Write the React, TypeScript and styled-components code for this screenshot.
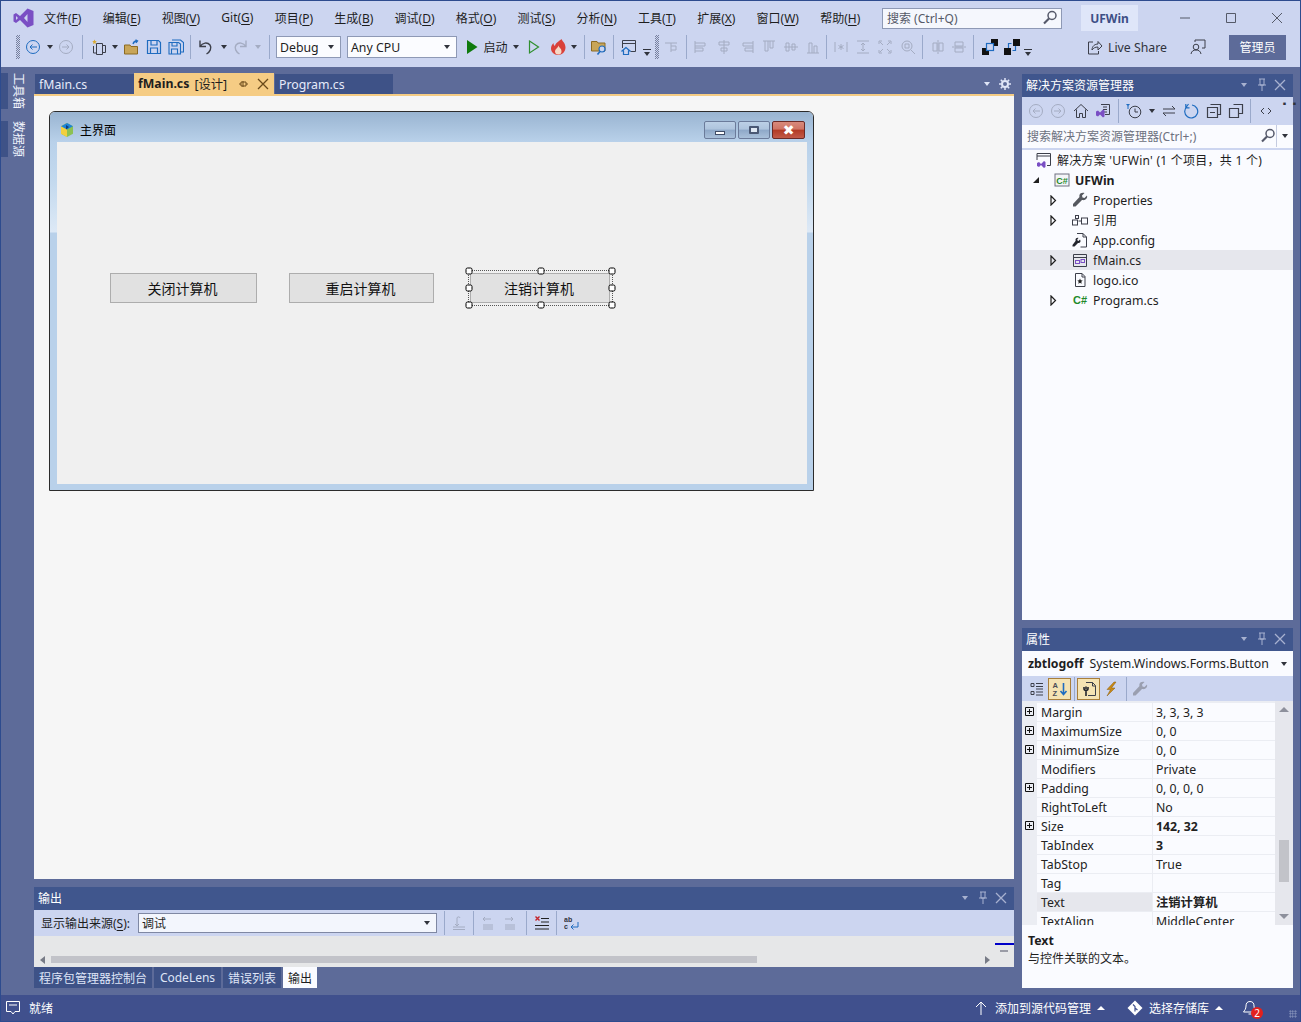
import React from 'react';
import styled, { createGlobalStyle } from 'styled-components';

const GlobalStyle = createGlobalStyle`
  html, body { margin: 0; padding: 0; background: #5d6b99; }
  body { font-family: "Noto Sans", "Noto Sans CJK SC", sans-serif; font-size: 12px; color: #1e1e1e; }
  * { box-sizing: border-box; }
`;

const gray = '#a4acc2';
const dark = '#3c3f4a';
const blue = '#1f6cc0';
const purple = '#7a4fc4';

// --- icon bits ---
const Ico = styled.svg.attrs({ viewBox: '0 0 16 16', fill: 'none' })`
  width: 16px;
  height: 16px;
  display: block;
  flex: none;
`;

const G = ({ d, c = gray }: { d: string; c?: string }) => (
  <Ico><path d={d} stroke={c} strokeWidth="1" /></Ico>
);

const Back = ({ c }: { c: string }) => (
  <Ico><circle cx="8" cy="8" r="6.5" stroke={c} /><path d="M12 8H5M7.5 5.5 5 8l2.5 2.5" stroke={c} /></Ico>
);
const Forward = ({ c }: { c: string }) => (
  <Ico><circle cx="8" cy="8" r="6.5" stroke={c} /><path d="M4 8h7M8.5 5.5 11 8l-2.5 2.5" stroke={c} /></Ico>
);
const NewProject = () => (
  <Ico>
    <path d="M5.500 4.500h6v11h-6zM2.500 7v7h3M11.500 6.500H14.500v7h-3" stroke={dark} />
    <path d="M3.500.5l.7 1.500 1.600.2-1.200 1.100.3 1.700-1.400-.8-1.400.8.3-1.700L1.200 2.200l1.600-.2z" fill="#d9a92f" />
  </Ico>
);
const OpenFolder = () => (
  <Ico>
    <path d="M.5 6h5.500l1 1.500h6.500V15H.5z" fill="#c8a558" stroke="#8b6a22" />
    <path d="M9 5c.5-2 2-3 4-3M11.500.8 13.500 2l-1.500 1.800" stroke={blue} strokeWidth="1.300" />
  </Ico>
);
const Save = () => (
  <Ico><path d="M1.500 1.500h11l2 2v11h-13zM5 1.500v4.500h6V1.500M4.500 14.500V9h7v5.500" stroke={blue} strokeWidth="1.200" /></Ico>
);
const SaveAll = () => (
  <Ico><path d="M4 1h8.500l3 2.500v9.500H13M1 3.500h9.500l2 1.500v10H1zM4 3.500v3.500h5V3.500M3.500 15v-5h6v5" stroke={blue} strokeWidth="1.100" /></Ico>
);
const Undo = ({ c }: { c: string }) => (
  <Ico><path d="M3 1.500v6h6M3 7.500c2.500-4 7.500-4.500 10-1.500 2 3 0 7-3.500 9" stroke={c} strokeWidth="1.400" /></Ico>
);
const Redo = ({ c }: { c: string }) => (
  <Ico><path d="M13 1.500v6H7M13 7.500c-2.500-4-7.500-4.500-10-1.500-2 3 0 7 3.500 9" stroke={c} strokeWidth="1.400" /></Ico>
);
const Play = () => <Ico><path d="M3 1 13.500 8 3 15z" fill="#0e7a0d" /></Ico>;
const PlayOutline = () => <Ico><path d="M3.500 2 12.500 8l-9 6z" stroke="#2f8f2e" strokeWidth="1.200" /></Ico>;
const Flame = () => (
  <Ico>
    <path d="M11.500 0c.5 2 4 4 4 8.500 0 4.500-3.500 7.500-7.500 7.500S1 13 1 9.500c0-2 1-4 2.500-5.500 0 1.500.5 2.500 1.500 3C5 4.500 8.500 2.500 11.500 0z" fill="#d9413a" />
    <path d="M8.500 6.500c0 1.500 3 3 3 5.500a3 3 0 0 1-6.500.5c0-2.500 3-3.500 3.500-6z" fill="#f7d9c6" />
  </Ico>
);
const FindFolder = () => (
  <Ico>
    <path d="M.5 2.500H6L7 4h7v8H.5z" fill="#c8a558" stroke="#8b6a22" />
    <circle cx="11" cy="10" r="3" fill="#ccd5f0" stroke={blue} strokeWidth="1.200" />
    <path d="M9 12.500l-2.500 3" stroke={blue} strokeWidth="1.600" />
  </Ico>
);
const WindowHome = () => (
  <Ico>
    <path d="M1.500 1.500h13v11h-5M1.500 9V1.500M1.500 4.500h13" stroke={dark} />
    <path d="M5 8.500 1 12h1.500v3.500h5V12H9z" stroke={blue} strokeWidth="1.200" fill="#ccd5f0" />
  </Ico>
);
const LayerFront = () => (
  <Ico>
    <rect x="0" y="9" width="7" height="7" fill="#111" />
    <rect x="9" y="0" width="7" height="7" fill="#111" />
    <rect x="4.500" y="4.500" width="7" height="7" fill="#ccd5f0" stroke={blue} strokeWidth="1.200" />
  </Ico>
);
const LayerBack = () => (
  <Ico>
    <rect x="0" y="9" width="7" height="7" fill="#111" />
    <rect x="9" y="0" width="7" height="7" fill="#111" />
    <path d="M4.500 9V4.500h3M11.500 7v4.500h-3" stroke={blue} strokeWidth="1.200" />
  </Ico>
);
const ShareIcon = () => (
  <Ico><path d="M6 3H1.500v12h10v-3M5 11c0-4 3-6 6-6V2.500L15 7l-4 4V8c-3 0-4.500 1-6 3z" stroke={dark} /></Ico>
);
const PersonIcon = () => (
  <Ico>
    <circle cx="6" cy="8" r="2.800" stroke={dark} />
    <path d="M1 15c.5-3 2.500-4 5-4s4.500 1 5 4M5 3V1h10v8h-3" stroke={dark} />
  </Ico>
);
const SearchGlass = () => (
  <Ico>
    <circle cx="10" cy="5.500" r="4" stroke="#55596a" strokeWidth="1.500" />
    <path d="M7 8.500 2 13.500" stroke="#55596a" strokeWidth="2.200" />
  </Ico>
);
const VsLogo = () => (
  <LogoSvg viewBox="0 0 21 20">
    <path d="M14.500.5 20.500 3v14l-6 2.500L7 12l-4 3-2.500-1.500v-7L3 5l4 3zM14.500 6 11 10l3.500 4zM3 8v4l2-2z" fill={purple} fillRule="evenodd" />
  </LogoSvg>
);
const VsDoc = () => (
  <Ico>
    <path d="M6 1.500h8.500v10H10" stroke={dark} />
    <path d="M8 4h4M8 6.500h4M8 9h4" stroke={dark} />
    <path d="M1 8.500 3 7.500l2 2 3-3 1.500 1v6l-1.500 1-3-3-2 2-2-1z" fill={purple} />
  </Ico>
);
const HomeIcon = () => <Ico><path d="M1 8 8 1.500 15 8M3.500 6.500v8h3v-4h3v4h3v-8" stroke={dark} /></Ico>;
const ClockIcon = () => (
  <Ico>
    <circle cx="9" cy="9" r="5.800" stroke={dark} />
    <path d="M9 5.500V9h3" stroke={dark} />
    <path d="M0 1h4L2 3.500z" fill={blue} />
    <path d="M2 3v3" stroke={blue} />
  </Ico>
);
const RefreshIcon = () => <Ico><path d="M5.500 1 3 4.500M2.800 1V4.800h3.700M4 3.500a6.500 6.500 0 1 0 5-1.500" stroke={blue} strokeWidth="1.200" /></Ico>;
const DocCopy = () => <Ico><path d="M5.500 1.500h9v9h-4M1.500 5.500h9v9h-9z" stroke={dark} strokeWidth="1.200" /></Ico>;
const Collapse = () => <Ico><path d="M4.500 1.500h10v10h-3M1.500 4.500h10v10h-10zM4 9.500h5" stroke={dark} strokeWidth="1.200" /></Ico>;

const SolutionIcon = () => (
  <Ico>
    <path d="M1 8V1.500h13.500v12H11M1 4h13.500" stroke={dark} />
    <path d="M1 11 3 10l2 2 3-3 1.500 1v5L8 16l-3-3-2 2-2-1z" fill={purple} />
  </Ico>
);
const ProjectIcon = () => (
  <Ico>
    <rect x="1" y="2" width="14" height="12" fill="#f4f5f8" stroke="#6e7180" />
    <text x="8" y="11.500" textAnchor="middle" fontSize="9" fontWeight="700" fill="#1f8a2a" fontFamily="Liberation Sans, sans-serif">C#</text>
  </Ico>
);
const WrenchIcon = ({ c = '#55585f' }: { c?: string }) => (
  <Ico><path d="M15 3.500 12.500 6 10.500 5.500 10 3.500 12.500 1C10.500.2 8 1 7.500 3c-.3 1 0 2 0 2L1 12v2.500h2.500L10 8s1.500.3 2.500 0c2-.6 3.200-2.500 2.500-4.500z" fill={c} /></Ico>
);
const RefsIcon = () => (
  <Ico>
    <rect x="0.500" y="8" width="5" height="5" stroke={dark} />
    <rect x="9.500" y="6" width="6" height="6" stroke={dark} />
    <rect x="3.500" y="3.500" width="3" height="3" stroke={dark} />
    <path d="M6.500 9h3" stroke={dark} />
  </Ico>
);
const ConfigIcon = () => (
  <Ico>
    <path d="M5 1.500h6l3.500 3.500v10h-6M11 1.500V5h3.500" stroke={dark} />
    <path d="M8 7.500 6.500 9 5.500 8.500l-.2-1.200L6.500 6C5 5.500 3.500 6.500 3.500 8l.2.800L.5 13v1.500h2L6 11h1c1.500-.3 2-1.800 1-3.500z" fill="#23252d" />
  </Ico>
);
const FormIcon = () => (
  <Ico>
    <path d="M1.500 2.500h13v12h-13zM1.500 5.500h13" stroke={dark} />
    <rect x="3.500" y="8.500" width="4" height="3" stroke={purple} />
    <rect x="9" y="7.500" width="3.500" height="3" stroke={purple} />
  </Ico>
);
const IcoFile = () => (
  <Ico>
    <path d="M3.500 1.500h6.500l3 3v10H3.500zM10 1.500V5h3" stroke={dark} />
    <path d="M8 6.500l.8 1.800 1.900.2-1.400 1.300.4 2L8 10.800l-1.700 1 .4-2-1.400-1.300 1.900-.2z" fill="#222" />
  </Ico>
);
const CsIcon = () => (
  <Ico>
    <text x="8" y="12" textAnchor="middle" fontSize="11" fontWeight="700" fill="#1f8a2a" fontFamily="Liberation Sans, sans-serif">C#</text>
  </Ico>
);
const Plus = () => (
  <PlusSvg viewBox="0 0 9 9"><path d="M.5.500h8v8h-8zM2 4.500h5M4.500 2v5" stroke="#111" fill="none" /></PlusSvg>
);
const ListIcon = () => (
  <Ico><path d="M2 2.500h3v3H2zM2 10.500h3v3H2zM7 2.500h7M7 5.500h7M7 8h7M7 11h7M7 14h7" stroke={dark} /></Ico>
);
const AzIcon = () => (
  <Ico>
    <text x="0.500" y="7" fontSize="7.500" fontWeight="700" fill="#4a4d58" fontFamily="Liberation Sans, sans-serif">A</text>
    <text x="0.500" y="15" fontSize="7.500" fontWeight="700" fill="#4a4d58" fontFamily="Liberation Sans, sans-serif">Z</text>
    <path d="M11.500 2v11M8.500 10l3 3.500 3-3.500" stroke={blue} strokeWidth="1.600" />
  </Ico>
);
const PropPage = () => (
  <Ico>
    <path d="M5 1.500h6.500l3 3v10H7M11.500 1.500V5h3" stroke={dark} />
    <path d="M5 5.500v2.800M3 6v1.500A2 2 0 0 0 7 7.500V6M5 9.500v5.500" stroke="#23252d" strokeWidth="1.600" />
  </Ico>
);
const BoltIcon = () => <Ico><path d="M11 1 4 8.500h3.500L4 15l8-8H8.500L13 1z" fill="#c98a15" stroke="#8a5d10" strokeWidth="0.500" /></Ico>;
const BellIcon = () => <Ico><path d="M8 1.500c-3 0-4 2-4 4.500 0 3-1.500 4.500-2.500 6h13C13.500 10.500 12 9 12 6c0-2.500-1-4.500-4-4.500zM6.500 14h3" stroke="#fff" /></Ico>;
const CommentIcon = () => <Ico><path d="M1.500 1.500h13v10H10L8 14l-2-2.500H1.500zM4 5h8" stroke="#fff" /></Ico>;
const UpIcon = () => <Ico><path d="M8 15V2M3 7l5-5 5 5" stroke="#fff" /></Ico>;
const GitIcon = () => <Ico><path d="M8 .5 15.500 8 8 15.500.5 8z" fill="#fff" /><path d="M6 4.500 8 6.500v5M8 8l2.500 2" stroke="#40508d" strokeWidth="1.200" /></Ico>;
const WordWrap = () => (
  <Ico>
    <text x="0" y="7" fontSize="7" fontWeight="700" fill="#30333c" fontFamily="Liberation Sans, sans-serif">ab</text>
    <text x="0" y="14" fontSize="7" fontWeight="700" fill="#30333c" fontFamily="Liberation Sans, sans-serif">c</text>
    <path d="M14 7v5H7M9.500 9.500 7 12l2.500 2.500" stroke={blue} />
  </Ico>
);
const ClearAll = () => (
  <Ico>
    <path d="M7 3.500h8M7 7h8M1 10.500h14M1 14h14" stroke="#222" />
    <path d="M1.500 1.500l4 4M5.500 1.500l-4 4" stroke="#c4242b" strokeWidth="1.400" />
  </Ico>
);
const MiniForm = () => (
  <Ico>
    <path d="M8 1 14 4.200v7.600L8 15 2 11.800V4.200z" fill="#8cc152" />
    <path d="M8 1 2 4.200v7.600L8 15z" fill="#f3cf3d" />
    <path d="M8 1 14 4.200 8 7.500 2 4.200z" fill="#1d84d8" />
    <path d="M7 3v4.500L10 5z" fill="#123f7a" />
  </Ico>
);

// --- window ---
const Window = styled.div`
  width: 1301px;
  height: 1022px;
  border: 1px solid #2d4b8e;
  background: #5d6b99;
  display: flex;
  flex-direction: column;
  overflow: hidden;
`;

const Chrome = styled.header`
  height: 66px;
  flex: none;
  background: #ccd5f0;
`;

const MenuRow = styled.div`
  height: 32px;
  display: flex;
  align-items: center;
  padding: 2px 0 0 12px;
`;

const LogoSvg = styled.svg`
  width: 21px;
  height: 20px;
  margin-right: 10px;
  flex: none;
`;

const Menu = styled.nav`
  display: flex;
  gap: 21.200px;
`;

const MenuItem = styled.span`
  color: #1e1e1e;
  white-space: nowrap;
  u { text-underline-offset: 2px; }
`;

const SearchBox = styled.div`
  margin-left: auto;
  width: 180px;
  height: 21px;
  background: #f5f7fd;
  border: 1px solid #8e99b5;
  display: flex;
  align-items: center;
  justify-content: space-between;
  padding: 0 3px 0 4px;
  color: #555a68;
`;

const ProjectBadge = styled.div`
  margin: 0 24px 0 19px;
  width: 57px;
  height: 26px;
  background: #dfe6f9;
  color: #3d4f86;
  font-weight: 700;
  display: flex;
  align-items: center;
  justify-content: center;
`;

const CaptionCtl = styled.div`
  width: 46px;
  height: 24px;
  display: flex;
  align-items: center;
  justify-content: center;
`;

const ToolRow = styled.div`
  height: 28px;
  display: flex;
  align-items: center;
  padding-left: 11px;
`;

const Slot = styled.div<{ $w: number }>`
  width: ${p => p.$w}px;
  height: 24px;
  flex: none;
  display: flex;
  align-items: center;
  justify-content: center;
  white-space: nowrap;
`;

const Sep = styled.i`
  display: block;
  width: 1px;
  height: 24px;
  background: #9aa9cb;
`;

const Grip = styled.i`
  display: block;
  width: 4px;
  height: 24px;
  background: repeating-conic-gradient(#77809e 0 25%, transparent 0 50%) 0 0 / 2px 2px;
`;

const Caret = styled.i<{ $c?: string }>`
  display: block;
  width: 0;
  height: 0;
  border-left: 3.500px solid transparent;
  border-right: 3.500px solid transparent;
  border-top: 4px solid ${p => p.$c || '#30333c'};
`;

const CaretUp = styled.i`
  display: block;
  width: 0;
  height: 0;
  border-left: 4px solid transparent;
  border-right: 4px solid transparent;
  border-bottom: 4px solid #fff;
`;

const DropLine = styled.i`
  display: block;
  width: 8px;
  border-top: 1px solid #30333c;
  margin-bottom: 2px;
`;

const DropStack = styled.div`
  display: flex;
  flex-direction: column;
  align-items: center;
  margin-top: 10px;
`;

const Combo = styled.div<{ $w: number; $ml: number }>`
  width: ${p => p.$w}px;
  margin-left: ${p => p.$ml}px;
  height: 22px;
  flex: none;
  background: #fbfcff;
  border: 1px solid #8e99b5;
  display: flex;
  align-items: center;
  justify-content: space-between;
  padding: 0 6px 0 3px;
  font-size: 12.300px;
`;

const RightTools = styled.div`
  margin-left: auto;
  display: flex;
  align-items: center;
  padding-right: 14px;
`;

const LiveShare = styled.div`
  display: flex;
  align-items: center;
  gap: 5px;
  font-size: 12.300px;
  color: #30333c;
`;

const AdminButton = styled.div`
  width: 57px;
  height: 25px;
  background: #5d6b99;
  color: #fff;
  display: flex;
  align-items: center;
  justify-content: center;
`;

const PersonSlot = styled.div`
  margin: 0 23px 0 23px;
`;

const Main = styled.main`
  flex: 1;
  display: flex;
  padding: 7px 7px 7px 0;
  min-height: 0;
`;

const Rail = styled.aside`
  width: 33px;
  flex: none;
  margin-top: -1px;
  display: flex;
  flex-direction: column;
  align-self: flex-start;
  gap: 12px;
`;

const RailTab = styled.div`
  height: 36px;
  display: flex;
  align-items: center;
  gap: 4px;
  &::before {
    content: '';
    width: 7px;
    height: 100%;
    background: #3e5287;
  }
`;

const RailText = styled.span`
  writing-mode: vertical-rl;
  text-orientation: sideways;
  color: #f0f3fc;
  line-height: 12px;
`;

const Center = styled.section`
  width: 980px;
  flex: none;
  margin-right: 8px;
  display: flex;
  flex-direction: column;
  gap: 8px;
`;

const DocWell = styled.div`
  flex: 1;
  display: flex;
  flex-direction: column;
  min-height: 0;
`;

const DocTabs = styled.div`
  height: 22px;
  flex: none;
  display: flex;
  align-items: flex-start;
  border-bottom: 2px solid #f5cc84;
`;

const DocTab = styled.div<{ $w: number; $active?: boolean }>`
  width: ${p => p.$w}px;
  height: ${p => (p.$active ? 21 : 20)}px;
  margin-left: ${p => (p.$active ? 0 : 1)}px;
  margin-top: ${p => (p.$active ? -1 : 0)}px;
  background: ${p => (p.$active ? '#f5cc84' : '#3e5287')};
  color: ${p => (p.$active ? '#1e1e1e' : '#e6ebfa')};
  display: flex;
  align-items: center;
  padding: 0 4px;
  gap: 5px;
  font-size: 12.300px;
  white-space: nowrap;
  b { font-weight: 700; }
`;

const DocTabActions = styled.div`
  margin-left: auto;
  display: flex;
  align-items: center;
  height: 20px;
`;

const TabGlyphs = styled.div`
  margin-left: auto;
  display: flex;
  align-items: center;
  gap: 6px;
`;

const Surface = styled.div`
  flex: 1;
  background: #f6f6f6;
  padding: 15px;
`;

// --- designer form ---
const FormWindow = styled.div`
  width: 765px;
  height: 380px;
  border: 1px solid #2b2b2b;
  border-radius: 6px 6px 0 0;
  display: flex;
  flex-direction: column;
  overflow: hidden;
`;

const FormTitle = styled.div`
  height: 30px;
  flex: none;
  background: linear-gradient(#99b4d1, #b9d1ea);
  display: flex;
  align-items: center;
  padding: 6px 8px 0 9px;
  gap: 5px;
  color: #000;
`;

const CaptionGroup = styled.div`
  margin-left: auto;
  display: flex;
  gap: 2px;
`;

const CaptionBtn = styled.div<{ $w: number; $close?: boolean }>`
  width: ${p => p.$w}px;
  height: 18px;
  border: 1px solid ${p => (p.$close ? '#6b2a26' : '#6b7b9a')};
  border-radius: 2px;
  background: ${p =>
    p.$close
      ? 'linear-gradient(#d88a7c 0, #cf7464 45%, #b23a24 50%, #c25a48 100%)'
      : 'linear-gradient(#bcd0e6 0, #aec4dd 45%, #8ea8c8 50%, #a9c0da 100%)'};
  display: flex;
  align-items: center;
  justify-content: center;
`;

const MinMark = styled.i`
  display: block;
  width: 10px;
  height: 4px;
  margin-top: 5px;
  background: #fff;
  border: 1px solid #3f4c66;
`;

const MaxMark = styled.i`
  display: block;
  width: 10px;
  height: 8px;
  background: #dfe8f3;
  border: 2px solid #4a5874;
  border-radius: 1px;
`;

const CloseMark = styled.span`
  color: #fff;
  font: 700 14px "Liberation Sans", "DejaVu Sans", sans-serif;
  line-height: 14px;
`;

const FormBody = styled.div`
  flex: 1;
  padding: 0 6px 6px 7px;
  background: linear-gradient(#b9d1ea 0, #c3d9ee 40px, #dde9f6 90px, #b9d1ea 91px, #b9d1ea 100%);
`;

const FormClient = styled.div`
  height: 100%;
  background: #f0f0f0;
  display: flex;
  align-items: center;
  align-content: flex-start;
  flex-wrap: wrap;
  padding: 128px 0 0 53px;
`;

const FormButton = styled.div<{ $w: number; $ml?: number }>`
  width: ${p => p.$w}px;
  margin-left: ${p => p.$ml || 0}px;
  height: 30px;
  background: #e1e1e1;
  border: 1px solid #adadad;
  font-size: 14px;
  color: #111;
  display: flex;
  align-items: center;
  justify-content: center;
  padding: 0 2px 1px 0;
`;

const SelectFrame = styled.div`
  position: relative;
  width: 145px;
  height: 36px;
  margin-left: 34px;
  border: 1px dotted #555;
  padding: 2px 0 0 1px;
`;

const Handle = styled.i<{ $x: number; $y: number }>`
  position: absolute;
  left: ${p => p.$x}%;
  top: ${p => p.$y}%;
  width: 7px;
  height: 7px;
  transform: translate(-50%, -50%);
  background: #fff;
  border: 1px solid #000;
  border-radius: 2px;
`;

// --- tool windows ---
const PanelHead = styled.div`
  height: 23px;
  flex: none;
  background: #40568d;
  color: #fff;
  display: flex;
  align-items: center;
  padding: 0 4px 1px;
`;

const HeadGlyphs = styled.div`
  margin-left: auto;
  display: flex;
  align-items: center;
`;

const HeadGlyph = styled.div`
  width: 18px;
  display: flex;
  justify-content: center;
  align-items: center;
`;

const SmallIco = styled.svg.attrs({ viewBox: '0 0 14 14', fill: 'none' })`
  width: 14px;
  height: 14px;
  display: block;
`;

const PanelTitle = ({ title }: { title: string }) => (
  <PanelHead>
    {title}
    <HeadGlyphs>
      <HeadGlyph><Caret $c="#a7b1d0" /></HeadGlyph>
      <HeadGlyph><SmallIco><path d="M4 1h6M5 1v6h4V1M3 7h8M7 7v6" stroke="#a7b1d0" /></SmallIco></HeadGlyph>
      <HeadGlyph><SmallIco><path d="M2 2l10 10M12 2 2 12" stroke="#a7b1d0" strokeWidth="1.300" /></SmallIco></HeadGlyph>
    </HeadGlyphs>
  </PanelHead>
);

const PlusSvg = styled.svg`
  width: 9px;
  height: 9px;
  display: block;
`;

const OutputPanel = styled.div`
  height: 80px;
  flex: none;
  display: flex;
  flex-direction: column;
`;

const OutputBar = styled.div`
  height: 26px;
  flex: none;
  background: #ccd5f0;
  display: flex;
  align-items: center;
  padding-left: 7px;
`;

const OutLabel = styled.span`
  width: 90px;
  white-space: nowrap;
  u { text-underline-offset: 2px; }
`;

const OutCombo = styled.div`
  width: 299px;
  margin: 0 3px 0 7px;
  height: 20px;
  background: #f3f6fd;
  border: 1px solid #7f88a3;
  display: flex;
  align-items: center;
  justify-content: space-between;
  padding: 0 6px 0 3px;
`;

const OutputBody = styled.div`
  flex: 1;
  background: #e6e7e8;
  display: flex;
`;

const HTrack = styled.div`
  flex: 1;
  height: 7px;
  margin-top: 20px;
  display: flex;
  align-items: center;
  padding: 0 5px 0 6px;
`;

const ArrowL = styled.i`
  display: block;
  width: 0;
  height: 0;
  border-top: 4px solid transparent;
  border-bottom: 4px solid transparent;
  border-right: 5px solid #777b86;
`;

const ArrowR = styled.i`
  display: block;
  width: 0;
  height: 0;
  margin-left: auto;
  border-top: 4px solid transparent;
  border-bottom: 4px solid transparent;
  border-left: 5px solid #777b86;
`;

const HThumb = styled.i`
  display: block;
  width: 706px;
  height: 7px;
  margin-left: 6px;
  background: #c2c3c9;
`;

const SplitMark = styled.div`
  width: 19px;
  flex: none;
  padding-top: 7px;
  &::before {
    content: '';
    display: block;
    height: 2px;
    background: #0000c8;
  }
  &::after {
    content: '';
    display: block;
    width: 8px;
    height: 2px;
    margin: 5px 0 0 5px;
    background: #9a9ca6;
  }
`;

const BottomTabs = styled.div`
  height: 21px;
  flex: none;
  display: flex;
  gap: 2px;
  margin-top: -8px;
`;

const BottomTab = styled.div<{ $w: number; $active?: boolean }>`
  width: ${p => p.$w}px;
  height: 21px;
  background: ${p => (p.$active ? '#fafbff' : '#3e5287')};
  color: ${p => (p.$active ? '#1e1e1e' : '#dfe5f7')};
  display: flex;
  align-items: center;
  justify-content: center;
  white-space: nowrap;
`;

const RightCol = styled.section`
  width: 271px;
  flex: none;
  display: flex;
  flex-direction: column;
  gap: 8px;
`;

const Explorer = styled.div`
  height: 546px;
  flex: none;
  background: #fafbff;
  display: flex;
  flex-direction: column;
`;

const ExpBar = styled.div`
  height: 28px;
  flex: none;
  background: #ccd5f0;
  display: flex;
  align-items: center;
  padding-left: 3px;
`;

const Overflow = styled.span`
  align-self: flex-start;
  font-size: 9px;
  line-height: 10px;
  color: #30333c;
  letter-spacing: 1px;
`;

const ExpSearch = styled.div`
  height: 23px;
  flex: none;
  background: #fafbff;
  display: flex;
  align-items: center;
  padding: 0 0 1px 5px;
  color: #6d7180;
`;

const ExpSearchTail = styled.div`
  margin-left: auto;
  display: flex;
  align-items: center;
  height: 100%;
  div + div { border-left: 1px solid #c4cbe0; }
`;

const ExpSearchBtn = styled.div`
  width: 17px;
  height: 100%;
  display: flex;
  align-items: center;
  justify-content: center;
`;

const SearchStrip = styled.div`
  height: 2px;
  flex: none;
  background: #ccd5f0;
`;

const Tree = styled.div`
  display: flex;
  flex-direction: column;
`;

const TreeRow = styled.div<{ $sel?: boolean }>`
  height: 20px;
  display: flex;
  align-items: center;
  background: ${p => (p.$sel ? '#e6e7ed' : 'transparent')};
  font-size: 12.300px;
  white-space: nowrap;
`;

const Expander = styled.div<{ $level: number }>`
  width: 14px;
  margin-left: ${p => (p.$level - 1) * 18 + 7}px;
  flex: none;
  display: flex;
  justify-content: center;
`;

const TriOpen = styled.i`
  display: block;
  width: 0;
  height: 0;
  border-left: 6px solid transparent;
  border-bottom: 6px solid #1e1e1e;
`;

const TriSvg = styled.svg.attrs({ viewBox: '0 0 7 11', fill: 'none' })`
  width: 7px;
  height: 11px;
  display: block;
  margin-left: -2px;
`;

const TriClosed = () => (
  <TriSvg><path d="M1 1l4.500 4.500L1 10z" stroke="#1e1e1e" strokeWidth="1.200" /></TriSvg>
);

const TreeIcon = styled.div`
  margin: 0 5px 0 11px;
`;

const TreeLabel = styled.span<{ $bold?: boolean }>`
  font-weight: ${p => (p.$bold ? 700 : 400)};
`;

const CjkText = styled.span<{ $wide?: boolean }>`
  font-size: 12px;
  letter-spacing: ${p => (p.$wide ? 0.25 : 0)}px;
`;

const Props = styled.div`
  flex: 1;
  background: #fafbff;
  display: flex;
  flex-direction: column;
  min-height: 0;
`;

const ObjectRow = styled.div`
  height: 25px;
  flex: none;
  display: flex;
  align-items: center;
  padding: 0 6px 0 6px;
  font-size: 12.300px;
  gap: 6px;
  white-space: nowrap;
  b { font-weight: 700; }
  i:last-child { margin-left: auto; }
`;

const PropBar = styled.div`
  height: 25px;
  flex: none;
  background: #ccd5f0;
  display: flex;
  align-items: center;
  padding-left: 3px;
`;

const ActiveTool = styled.div`
  width: 23px;
  height: 22px;
  flex: none;
  background: #f5e3b3;
  border: 1px solid #a87e3b;
  display: flex;
  align-items: center;
  justify-content: center;
`;

const GridArea = styled.div`
  height: 224px;
  flex: none;
  display: flex;
  background: #ebedf3;
`;

const GridRows = styled.div`
  width: 253px;
  flex: none;
  padding-top: 2px;
  overflow: hidden;
`;

const GridRow = styled.div`
  height: 19px;
  display: grid;
  grid-template-columns: 15px 116px 122px;
  font-size: 12.300px;
  color: #222;
`;

const Gutter = styled.div`
  display: flex;
  align-items: flex-start;
  padding: 4px 0 0 3px;
`;

const NameCell = styled.div<{ $sel?: boolean }>`
  height: 18px;
  background: ${p => (p.$sel ? '#e6e7ed' : '#fafbff')};
  padding-left: 4px;
  line-height: 20px;
  margin-right: 1px;
  white-space: nowrap;
`;

const ValueCell = styled.div<{ $bold?: boolean }>`
  height: 18px;
  background: #fafbff;
  padding-left: 3px;
  line-height: 20px;
  font-weight: ${p => (p.$bold ? 700 : 400)};
  white-space: nowrap;
  overflow: hidden;
`;

const VScroll = styled.div`
  width: 18px;
  flex: none;
  display: flex;
  flex-direction: column;
  align-items: center;
  padding: 6px 0;
  background: #e6e7ed;
`;

const ArrowUpGray = styled.i`
  display: block;
  width: 0;
  height: 0;
  border-left: 5px solid transparent;
  border-right: 5px solid transparent;
  border-bottom: 5px solid #8d909c;
`;

const ArrowDownGray = styled.i`
  display: block;
  margin-top: auto;
  width: 0;
  height: 0;
  border-left: 5px solid transparent;
  border-right: 5px solid transparent;
  border-top: 5px solid #8d909c;
`;

const VThumb = styled.i`
  display: block;
  width: 10px;
  height: 42px;
  margin-top: 128px;
  background: #c2c3c9;
`;

const Desc = styled.div`
  flex: 1;
  padding: 7px 6px;
  line-height: 18px;
  b { display: block; font-size: 12.300px; font-weight: 700; }
`;

// --- status bar ---
const StatusBar = styled.footer`
  height: 26px;
  flex: none;
  background: #40508d;
  color: #fff;
  display: flex;
  align-items: center;
  padding-left: 4px;
  gap: 8px;
`;

const StatusRight = styled.div`
  margin-left: auto;
  display: flex;
  align-items: center;
`;

const StatusItem = styled.div<{ $ml: number }>`
  display: flex;
  align-items: center;
  gap: 6px;
  margin-left: ${p => p.$ml}px;
`;

const BellWrap = styled.div`
  position: relative;
  margin: 0 42px 0 19px;
`;

const Badge = styled.span`
  position: absolute;
  right: -5px;
  bottom: -3px;
  width: 12px;
  height: 12px;
  border-radius: 50%;
  background: #e5201c;
  color: #fff;
  font-size: 10px;
  line-height: 12px;
  text-align: center;
`;

const ResizeGrip = styled.i`
  position: absolute;
  right: 3px;
  bottom: 3px;
  width: 8px;
  height: 8px;
  background-image: radial-gradient(#8e9ac0 0.8px, transparent 0.9px);
  background-size: 2.500px 2.500px;
`;

const StatusShell = styled.div`
  position: relative;
  flex: none;
`;

// --- data ---
const menus: [string, string, string][] = [
  ['文件(', 'F', ')'], ['编辑(', 'E', ')'], ['视图(', 'V', ')'], ['Git(', 'G', ')'],
  ['项目(', 'P', ')'], ['生成(', 'B', ')'], ['调试(', 'D', ')'], ['格式(', 'O', ')'],
  ['测试(', 'S', ')'], ['分析(', 'N', ')'], ['工具(', 'T', ')'], ['扩展(', 'X', ')'],
  ['窗口(', 'W', ')'], ['帮助(', 'H', ')'],
];

const tools1: [number, React.ReactNode][] = [
  [12, <Grip />], [18, <Back c={blue} />], [16, <Caret />], [16, <Forward c={gray} />], [16, <Sep />],
  [18, <NewProject />], [14, <Caret />], [20, <OpenFolder />], [24, <Save />], [20, <SaveAll />], [8, <Sep />],
  [22, <Undo c={dark} />], [16, <Caret />], [18, <Redo c={gray} />], [16, <Caret $c={gray} />], [6, <Sep />],
];

const tools2: [number, React.ReactNode][] = [
  [5, null], [20, <Play />], [27, '启动'], [14, <Caret />], [22, <PlayOutline />], [25, <Flame />],
  [8, <Caret />], [12, <Sep />], [18, <FindFolder />], [10, <Sep />], [22, <WindowHome />],
  [14, <DropStack><DropLine /><Caret /></DropStack>], [6, <Grip />],
  [24, <G d="M1 4h12M7 4v9M7 7h5v4H7" />], [5, <Sep />],
  [24, <G d="M2 2v12M2 4h10v3H2M2 9h8v3H2" />],
  [22, <G d="M8 1v14M3 3h10v3H3zM5 9h6v3H5z" />],
  [23, <G d="M14 2v12M14 4H4v3h10M14 9H6v3h8" />],
  [22, <G d="M2 2h12M4 2v10h3V2M9 2v7h3V2" />],
  [22, <G d="M1 8h14M3 4h3v8H3zM9 5h3v6H9z" />],
  [21, <G d="M2 14h12M4 14V4h3v10M9 14V7h3v7" />],
  [6, <Sep />],
  [24, <G d="M2 3v10M14 3v10M8 5v6M5.500 6.500l5 3M10.500 6.500l-5 3" />],
  [20, <G d="M2 2h12M2 14h12M8 4v8M6 6l2-2 2 2M6 10l2 2 2-2" />],
  [24, <G d="M2 5V2h3M11 2h3v3M14 11v3h-3M5 14H2v-3M3 3l3 3M13 3l-3 3M13 13l-3-3M3 13l3-3" />],
  [22, <G d="M12 7A5 5 0 1 1 2 7a5 5 0 0 1 10 0zM11 11l4 4M5 5h4v4H5z" />],
  [7, <Sep />],
  [24, <G d="M8 1v14M3 4h4v8H3zM9 4h4v8H9z" />],
  [18, <G d="M1 8h14M4 3h8v4H4zM4 9h8v4H4z" />],
  [11, <Sep />],
  [22, <LayerFront />], [22, <LayerBack />], [10, <DropStack><DropLine /><Caret /></DropStack>],
];

const expTools: [number, React.ReactNode][] = [
  [22, <Back c={gray} />], [22, <Forward c={gray} />], [23, <HomeIcon />], [21, <VsDoc />], [11, <Sep />],
  [20, <ClockIcon />], [16, <Caret />], [18, <G d="M2 6h12l-3-3M14 10H2l3 3" c={dark} />],
  [25, <RefreshIcon />], [21, <Collapse />], [23, <DocCopy />], [7, <Sep />], [24, <G d="M6 5 3 8l3 3M10 5l3 3-3 3" c={dark} />],
];

const rows: { n: string; v: string; plus?: boolean; bold?: boolean; sel?: boolean }[] = [
  { n: 'Margin', v: '3, 3, 3, 3', plus: true },
  { n: 'MaximumSize', v: '0, 0', plus: true },
  { n: 'MinimumSize', v: '0, 0', plus: true },
  { n: 'Modifiers', v: 'Private' },
  { n: 'Padding', v: '0, 0, 0, 0', plus: true },
  { n: 'RightToLeft', v: 'No' },
  { n: 'Size', v: '142, 32', plus: true, bold: true },
  { n: 'TabIndex', v: '3', bold: true },
  { n: 'TabStop', v: 'True' },
  { n: 'Tag', v: '' },
  { n: 'Text', v: '注销计算机', bold: true, sel: true },
  { n: 'TextAlign', v: 'MiddleCenter' },
];

const handles = [[0, 0], [50, 0], [100, 0], [0, 50], [100, 50], [0, 100], [50, 100], [100, 100]];

const App: React.FC = () => (
  <>
    <GlobalStyle />
    <Window>
      <Chrome>
        <MenuRow>
          <VsLogo />
          <Menu>
            {menus.map(([a, k, z]) => (
              <MenuItem key={k}>{a}<u>{k}</u>{z}</MenuItem>
            ))}
          </Menu>
          <SearchBox>
            搜索 (Ctrl+Q)
            <SearchGlass />
          </SearchBox>
          <ProjectBadge>UFWin</ProjectBadge>
          <CaptionCtl><G d="M3 8h10" c="#555a68" /></CaptionCtl>
          <CaptionCtl><G d="M3.500 3.500h9v9h-9z" c="#555a68" /></CaptionCtl>
          <CaptionCtl><G d="M3 3l10 10M13 3 3 13" c="#555a68" /></CaptionCtl>
        </MenuRow>
        <ToolRow>
          {tools1.map(([w, el], i) => <Slot key={i} $w={w}>{el}</Slot>)}
          <Combo $w={65} $ml={4}>Debug<Caret /></Combo>
          <Combo $w={110} $ml={6}>Any CPU<Caret /></Combo>
          {tools2.map(([w, el], i) => <Slot key={i} $w={w}>{el}</Slot>)}
          <RightTools>
            <LiveShare><ShareIcon />Live Share</LiveShare>
            <PersonSlot><PersonIcon /></PersonSlot>
            <AdminButton>管理员</AdminButton>
          </RightTools>
        </ToolRow>
      </Chrome>

      <Main>
        <Rail>
          <RailTab><RailText>工具箱</RailText></RailTab>
          <RailTab><RailText>数据源</RailText></RailTab>
        </Rail>

        <Center>
          <DocWell>
            <DocTabs>
              <DocTab $w={99}>fMain.cs</DocTab>
              <DocTab $w={140} $active>
                <b>fMain.cs</b> [设计]
                <TabGlyphs>
                  <SmallIco><path d="M3 7h2M5 5h5v4H5zM10 7h2M7 4v6" stroke="#6a4a1a" /></SmallIco>
                  <SmallIco><path d="M2 2l10 10M12 2 2 12" stroke="#6a4a1a" strokeWidth="1.300" /></SmallIco>
                </TabGlyphs>
              </DocTab>
              <DocTab $w={118}>Program.cs</DocTab>
              <DocTabActions>
                <HeadGlyph><Caret $c="#dfe5f7" /></HeadGlyph>
                <HeadGlyph>
                  <SmallIco>
                    <circle cx="7" cy="7" r="3" stroke="#dfe5f7" strokeWidth="2" />
                    <path d="M7 1v2.500M7 10.500V13M1 7h2.500M10.500 7H13M2.800 2.800l1.700 1.700M9.500 9.500l1.700 1.700M11.200 2.800 9.500 4.500M4.500 9.500l-1.700 1.700" stroke="#dfe5f7" strokeWidth="1.500" />
                  </SmallIco>
                </HeadGlyph>
              </DocTabActions>
            </DocTabs>
            <Surface>
              <FormWindow>
                <FormTitle>
                  <MiniForm />
                  主界面
                  <CaptionGroup>
                    <CaptionBtn $w={32}><MinMark /></CaptionBtn>
                    <CaptionBtn $w={32}><MaxMark /></CaptionBtn>
                    <CaptionBtn $w={33} $close><CloseMark>✖</CloseMark></CaptionBtn>
                  </CaptionGroup>
                </FormTitle>
                <FormBody>
                  <FormClient>
                    <FormButton $w={147}>关闭计算机</FormButton>
                    <FormButton $w={145} $ml={32}>重启计算机</FormButton>
                    <SelectFrame>
                      <FormButton $w={140}>注销计算机</FormButton>
                      {handles.map(([x, y]) => <Handle key={`${x}-${y}`} $x={x} $y={y} />)}
                    </SelectFrame>
                  </FormClient>
                </FormBody>
              </FormWindow>
            </Surface>
          </DocWell>

          <OutputPanel>
            <PanelTitle title="输出" />
            <OutputBar>
              <OutLabel>显示输出来源(<u>S</u>):</OutLabel>
              <OutCombo>调试<Caret /></OutCombo>
              <Slot $w={8}><Sep /></Slot>
              <Slot $w={21}><G d="M6 11V3c0-1.500 3-1.500 3 0M4 9l2 2 2-2M2 12h12M2 14.500h12" /></Slot>
              <Slot $w={8}><Sep /></Slot>
              <Slot $w={22}><G d="M11 4H3M5 2 3 4l2 2M3 10h10M3 12h10M3 14h10" /></Slot>
              <Slot $w={22}><G d="M3 4h8M9 2l2 2-2 2M3 10h10M3 12h10M3 14h10" /></Slot>
              <Slot $w={11}><Sep /></Slot>
              <Slot $w={19}><ClearAll /></Slot>
              <Slot $w={10}><Sep /></Slot>
              <Slot $w={22}><WordWrap /></Slot>
            </OutputBar>
            <OutputBody>
              <HTrack>
                <ArrowL />
                <HThumb />
                <ArrowR />
              </HTrack>
              <SplitMark />
            </OutputBody>
          </OutputPanel>
          <BottomTabs>
            <BottomTab $w={118}>程序包管理器控制台</BottomTab>
            <BottomTab $w={67}>CodeLens</BottomTab>
            <BottomTab $w={58}>错误列表</BottomTab>
            <BottomTab $w={34} $active>输出</BottomTab>
          </BottomTabs>
        </Center>

        <RightCol>
          <Explorer>
            <PanelTitle title="解决方案资源管理器" />
            <ExpBar>
              {expTools.map(([w, el], i) => <Slot key={i} $w={w}>{el}</Slot>)}
              <Slot $w={24}><Overflow>▪▪</Overflow></Slot>
            </ExpBar>
            <ExpSearch>
              搜索解决方案资源管理器(Ctrl+;)
              <ExpSearchTail>
                <ExpSearchBtn><SearchGlass /></ExpSearchBtn>
                <ExpSearchBtn><Caret /></ExpSearchBtn>
              </ExpSearchTail>
            </ExpSearch>
            <SearchStrip />
            <Tree>
              <TreeRow>
                <Expander $level={0} />
                <TreeIcon><SolutionIcon /></TreeIcon>
                <TreeLabel><CjkText $wide>解决方案 'UFWin' (1 个项目，共 1 个)</CjkText></TreeLabel>
              </TreeRow>
              <TreeRow>
                <Expander $level={1}><TriOpen /></Expander>
                <TreeIcon><ProjectIcon /></TreeIcon>
                <TreeLabel $bold>UFWin</TreeLabel>
              </TreeRow>
              <TreeRow>
                <Expander $level={2}><TriClosed /></Expander>
                <TreeIcon><WrenchIcon /></TreeIcon>
                <TreeLabel>Properties</TreeLabel>
              </TreeRow>
              <TreeRow>
                <Expander $level={2}><TriClosed /></Expander>
                <TreeIcon><RefsIcon /></TreeIcon>
                <TreeLabel><CjkText>引用</CjkText></TreeLabel>
              </TreeRow>
              <TreeRow>
                <Expander $level={2} />
                <TreeIcon><ConfigIcon /></TreeIcon>
                <TreeLabel>App.config</TreeLabel>
              </TreeRow>
              <TreeRow $sel>
                <Expander $level={2}><TriClosed /></Expander>
                <TreeIcon><FormIcon /></TreeIcon>
                <TreeLabel>fMain.cs</TreeLabel>
              </TreeRow>
              <TreeRow>
                <Expander $level={2} />
                <TreeIcon><IcoFile /></TreeIcon>
                <TreeLabel>logo.ico</TreeLabel>
              </TreeRow>
              <TreeRow>
                <Expander $level={2}><TriClosed /></Expander>
                <TreeIcon><CsIcon /></TreeIcon>
                <TreeLabel>Program.cs</TreeLabel>
              </TreeRow>
            </Tree>
          </Explorer>

          <Props>
            <PanelTitle title="属性" />
            <ObjectRow>
              <b>zbtlogoff</b> System.Windows.Forms.Button
              <Caret />
            </ObjectRow>
            <PropBar>
              <Slot $w={23}><ListIcon /></Slot>
              <ActiveTool><AzIcon /></ActiveTool>
              <Slot $w={6}><Sep /></Slot>
              <ActiveTool><PropPage /></ActiveTool>
              <Slot $w={22}><BoltIcon /></Slot>
              <Slot $w={8}><Sep /></Slot>
              <Slot $w={20}><WrenchIcon c="#9a9fb0" /></Slot>
            </PropBar>
            <GridArea>
              <GridRows>
                {rows.map(r => (
                  <GridRow key={r.n}>
                    <Gutter>{r.plus && <Plus />}</Gutter>
                    <NameCell $sel={r.sel}>{r.n}</NameCell>
                    <ValueCell $bold={r.bold}>{r.v}</ValueCell>
                  </GridRow>
                ))}
              </GridRows>
              <VScroll>
                <ArrowUpGray />
                <VThumb />
                <ArrowDownGray />
              </VScroll>
            </GridArea>
            <Desc>
              <b>Text</b>
              与控件关联的文本。
            </Desc>
          </Props>
        </RightCol>
      </Main>

      <StatusShell>
        <StatusBar>
          <CommentIcon />
          就绪
          <StatusRight>
            <StatusItem $ml={0}><UpIcon />添加到源代码管理<CaretUp /></StatusItem>
            <StatusItem $ml={22}><GitIcon />选择存储库<CaretUp /></StatusItem>
            <BellWrap><BellIcon /><Badge>2</Badge></BellWrap>
          </StatusRight>
        </StatusBar>
        <ResizeGrip />
      </StatusShell>
    </Window>
  </>
);

export default App;
